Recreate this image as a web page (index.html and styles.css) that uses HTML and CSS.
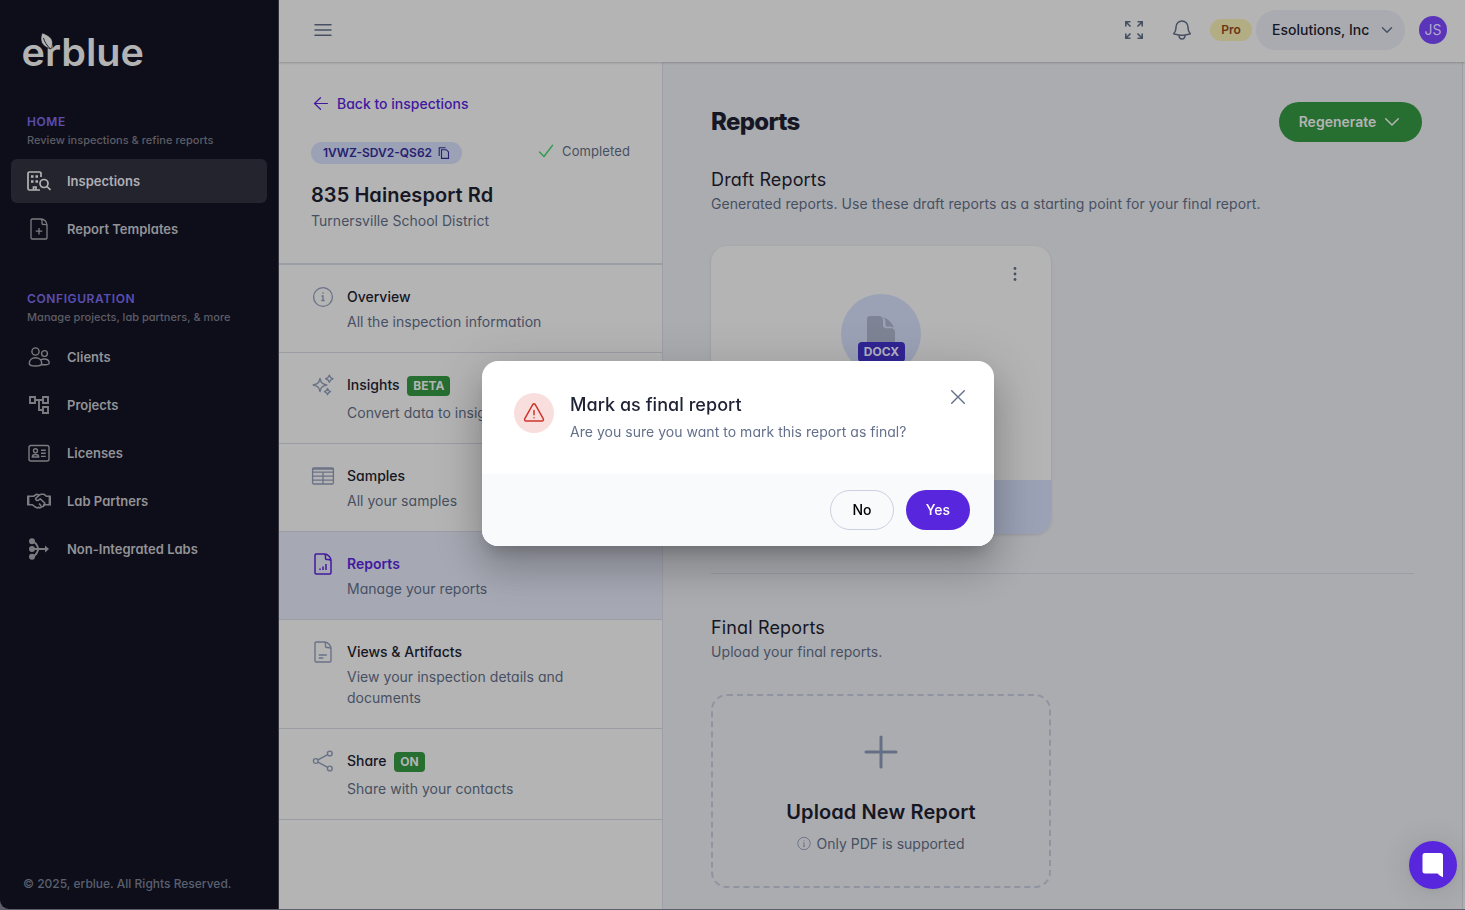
FILE: index.html
```
<!DOCTYPE html>
<html lang="en">
<head>
    <meta charset="UTF-8">
    <meta name="viewport" content="width=device-width, initial-scale=1.0">
    <title>erblue | Reports</title>
    <link rel="stylesheet" href="styles.css">
</head>
<body>
<div class="app">
    <!-- sidebar -->
    <nav class="sidebar">
        <svg class="logo" width="124" height="38" viewBox="0 0 124 38">
            <text x="-1.500" y="34.300" textLength="122.500" lengthAdjust="spacingAndGlyphs">erblue</text>
            <path class="leaf" d="M19.200 1c6 2 10.300 5 10.300 10 0 3-1 5-1.500 6C22 15.500 18 12 18 7c0-3 .6-4 1.200-6z"/>
            <path class="vein" d="M20.500 6c1 4 3 7 7 11"/>
        </svg>

        <div class="nav-group">
            <div class="nav-title">HOME</div>
            <div class="nav-sub">Review inspections &amp; refine reports</div>
            <a class="nav-item active">
                <svg width="24" height="24" viewBox="0 0 24 24" fill="none" stroke="currentColor" stroke-width="1.700">
                    <path d="M14 8V4.500A1.500 1.500 0 0 0 12.500 3H2.500A1.500 1.500 0 0 0 1 4.500v15A1.500 1.500 0 0 0 2.500 21h10.500M6.500 21v-3h2.500v3"/>
                    <path d="M4 7.500h2.500M8.500 7.500H11M4 12.500h2.500M8.500 12.500H11" stroke-width="2.500"/>
                    <circle cx="17" cy="14.500" r="4"/><path d="m20 17.500 3.500 3.500"/>
                </svg>
                <span>Inspections</span>
            </a>
            <a class="nav-item">
                <svg width="24" height="24" viewBox="0 0 24 24" fill="none" stroke="currentColor" stroke-width="1.300" stroke-linejoin="round">
                    <path d="M14 2H5.200A1.200 1.200 0 0 0 4 3.200v17.600A1.200 1.200 0 0 0 5.200 22h13.600a1.200 1.200 0 0 0 1.200-1.200V8c0-3.500-3-6-6-6zM14 2c1.500 1 1 2 1 4.500 0 .8.500 1 1.200 1C18 7.500 19 7 20 8.500M12 11v6.500M8.700 14.200h6.600"/>
                </svg>
                <span>Report Templates</span>
            </a>
        </div>

        <div class="nav-group">
            <div class="nav-title">CONFIGURATION</div>
            <div class="nav-sub">Manage projects, lab partners, &amp; more</div>
            <a class="nav-item">
                <svg width="24" height="24" viewBox="0 0 24 24" fill="none" stroke="currentColor" stroke-width="1.400" stroke-linejoin="round">
                    <circle cx="8.500" cy="6.500" r="3.600"/><circle cx="17.500" cy="8.500" r="2.900"/>
                    <path d="M2.300 18.500c0-3.700 2.700-5.800 6.200-5.800s6.200 2.100 6.200 5.800c0 1.600-2.700 2.500-6.200 2.500s-6.200-.9-6.200-2.500zM13.500 14.800c1-.5 2.200-.8 3.700-.8 3 0 5 1.700 5 4.200 0 1.300-3.500 2-7.500 1.300"/>
                </svg>
                <span>Clients</span>
            </a>
            <a class="nav-item">
                <svg width="24" height="24" viewBox="0 0 24 24" fill="none" stroke="currentColor" stroke-width="1.900">
                    <path d="M3 4h5v6H3zM16 4h5v6h-5zM16 14h5v6h-5zM8 7h8M12 7v10h4"/>
                </svg>
                <span>Projects</span>
            </a>
            <a class="nav-item">
                <svg width="24" height="24" viewBox="0 0 24 24" fill="none" stroke="currentColor" stroke-width="1.400">
                    <rect x="2" y="4.500" width="20" height="15.500" rx="2"/>
                    <circle cx="8.500" cy="9.800" r="2"/><path d="M5.300 16c0-1.600 1.500-2.500 3.200-2.500s3.200.9 3.200 2.500zM14 9.200h4.800M14 12.300h4.800M14 15.400h4.800"/>
                </svg>
                <span>Licenses</span>
            </a>
            <a class="nav-item">
                <svg width="24" height="24" viewBox="0 0 24 24" fill="none" stroke="currentColor" stroke-width="1.600" stroke-linejoin="round">
                    <path d="M1.200 6.500v10M22.800 6.500v10" stroke-width="2.400"/>
                    <path d="M2 7.200h4.500l3.200-2 2.300.8 2.300-.8h2.500l2.500 2H22M2 15.700h3.200L8.800 18.300l1.700.7 1.200-.7 1.300.6 1.500-1.100 1.700-.3 1.800-1.800H22M12.500 6 8.700 9.300c-.5 2 1.600 2.700 3 1.700l1.500-1.200 4.600 4.200-1.600 3M12 14.500l2.200 2.500"/>
                </svg>
                <span>Lab Partners</span>
            </a>
            <a class="nav-item">
                <svg width="24" height="24" viewBox="0 0 24 24" fill="none" stroke="currentColor" stroke-width="1.800">
                    <path d="M5 4c4 1 5 4 6.500 8C10 16 9 19 5 20M5 12h15"/>
                    <g fill="currentColor" stroke="none"><circle cx="5" cy="4.200" r="3"/><circle cx="5" cy="12" r="3"/><circle cx="5" cy="19.800" r="3"/><path d="m18 8.500 4 3.500-4 3.500z"/></g>
                </svg>
                <span>Non-Integrated Labs</span>
            </a>
        </div>
        <div class="copyright">© 2025, erblue. All Rights Reserved.</div>
    </nav>

    <div class="main">
        <header class="topbar">
            <svg class="menu" width="24" height="24" viewBox="0 0 24 24" fill="none" stroke="currentColor" stroke-width="1.500" stroke-linecap="round"><path d="M4 6.800h16M4 12h16M4 17.300h16"/></svg>
            <svg class="expand" width="24" height="24" viewBox="0 0 24 24" fill="none" stroke="currentColor" stroke-width="1.600">
                <path d="m3.500 3.500 5 5M3.800 8.500V3.800h4.700M20.500 3.500l-5 5M15.500 3.800h4.700v4.700M3.500 20.500l5-5M3.800 15.500v4.700h4.700M20.500 20.500l-5-5M20.200 15.500v4.700h-4.700"/>
            </svg>
            <svg class="bell" width="24" height="24" viewBox="0 0 24 24" fill="none" stroke="currentColor" stroke-width="1.500" stroke-linecap="round" stroke-linejoin="round">
                <path d="M14.857 17.082a23.848 23.848 0 0 0 5.454-1.310A8.967 8.967 0 0 1 18 9.750V9A6 6 0 0 0 6 9v.75a8.967 8.967 0 0 1-2.312 6.022c1.733.64 3.560 1.085 5.455 1.310m5.714 0a24.255 24.255 0 0 1-5.714 0m5.714 0a3 3 0 1 1-5.714 0"/>
            </svg>
            <span class="plan">Pro</span>
            <button class="org">Esolutions, Inc
                <svg width="12" height="8" viewBox="0 0 12 8" fill="none" stroke="currentColor" stroke-width="1.500" stroke-linecap="round"><path d="m1.500 1.800 4.500 4.500 4.500-4.500"/></svg>
            </button>
            <span class="avatar">JS</span>
        </header>

        <div class="body">
            <aside class="panel">
                <div class="panel-head">
                    <a class="back">
                        <svg width="16" height="14" viewBox="0 0 16 14" fill="none" stroke="currentColor" stroke-width="1.200" stroke-linecap="round" stroke-linejoin="round"><path d="M14.500 7.500H1.500M7.500 1.700l-6 5.800 6 5.800"/></svg>
                        Back to inspections
                    </a>
                    <div class="status-row">
                        <span class="code">1VWZ-SDV2-QS62
                            <svg width="12" height="12" viewBox="0 0 12 12" fill="none" stroke="currentColor" stroke-width="1.100"><path d="M3.500 2.700h4.800l2.200 2.200v6.500h-7zM1.200 9V.7h6.300"/></svg>
                        </span>
                        <span class="completed">
                            <svg width="16" height="14" viewBox="0 0 16 14" fill="none" stroke="currentColor" stroke-width="1.400" stroke-linecap="round" stroke-linejoin="round"><path d="m1.500 8 4.500 4.500L14.500 1.300"/></svg>
                            Completed
                        </span>
                    </div>
                    <h2>835 Hainesport Rd</h2>
                    <p>Turnersville School District</p>
                </div>

                <a class="step">
                    <svg width="24" height="24" viewBox="0 0 24 24" fill="none" stroke="currentColor" stroke-width="1.300"><circle cx="12" cy="12" r="9.400"/><path d="M10.500 11H12v4.500M10.300 15.500h3.400M11.400 8h1.200"/></svg>
                    <div><div class="step-title">Overview</div><div class="step-text">All the inspection information</div></div>
                </a>
                <a class="step">
                    <svg width="24" height="24" viewBox="0 0 24 24" fill="none" stroke="currentColor" stroke-width="1.400" stroke-linejoin="round">
                        <path d="M9 5.500c.9 4.300 2.300 5.600 6.800 6.500-4.500.9-5.900 2.200-6.800 6.500-.9-4.300-2.300-5.600-6.800-6.500 4.500-.9 5.900-2.200 6.800-6.500zM18.300 2.200c.6 2.400 1.200 3 3.600 3.600-2.400.6-3 1.200-3.600 3.600-.6-2.400-1.200-3-3.600-3.600 2.400-.6 3-1.200 3.600-3.600zM16.500 15.500c.5 2.200 1 2.600 3.100 3.100-2.100.5-2.600.9-3.100 3.100-.5-2.200-1-2.600-3.100-3.100 2.100-.5 2.600-.9 3.100-3.100z"/>
                    </svg>
                    <div><div class="step-title">Insights <span class="tag">BETA</span></div><div class="step-text">Convert data to insights</div></div>
                </a>
                <a class="step">
                    <svg width="24" height="24" viewBox="0 0 24 24" fill="none" stroke="currentColor" stroke-width="1.300"><rect x="1.600" y="4" width="20.800" height="16" rx="1.200"/><path d="M1.600 8.200h20.800M1.600 12.200h20.800M1.600 16.200h20.800M12 8.200V20M1.600 5h20.800"/></svg>
                    <div><div class="step-title">Samples</div><div class="step-text">All your samples</div></div>
                </a>
                <a class="step current">
                    <svg width="24" height="24" viewBox="0 0 24 24" fill="none" stroke="currentColor" stroke-width="1.500" stroke-linejoin="round">
                        <path d="M13.500 2H5.200A1.200 1.200 0 0 0 4 3.200v17.600A1.200 1.200 0 0 0 5.200 22h13.600a1.200 1.200 0 0 0 1.200-1.200V8.500c0-3.500-3.500-6.500-6.500-6.500zM13.500 2c1.500 1 1 2.500 1 4.500 0 .7.300 1 1 1 2-.2 3.500-.2 4.500 1M9 18v-1.500M12 18v-3.500M15 18v-6"/>
                    </svg>
                    <div><div class="step-title">Reports</div><div class="step-text">Manage your reports</div></div>
                </a>
                <a class="step">
                    <svg width="24" height="24" viewBox="0 0 24 24" fill="none" stroke="currentColor" stroke-width="1.400" stroke-linejoin="round" stroke-linecap="round">
                        <path d="M13.500 2H5.200A1.200 1.200 0 0 0 4 3.200v17.600A1.200 1.200 0 0 0 5.200 22h13.600a1.200 1.200 0 0 0 1.200-1.200V8.500c0-3.500-3.500-6.500-6.500-6.500zM13.500 2c1.500 1 1 2.500 1 4.500 0 .7.300 1 1 1 2-.2 3.500-.2 4.500 1M8.300 15h7M8.300 18h3.500"/>
                    </svg>
                    <div><div class="step-title">Views &amp; Artifacts</div><div class="step-text">View your inspection details and documents</div></div>
                </a>
                <a class="step">
                    <svg width="24" height="24" viewBox="0 0 24 24" fill="none" stroke="currentColor" stroke-width="1.400"><circle cx="4.800" cy="12" r="2.400"/><circle cx="18.800" cy="4.500" r="2.400"/><circle cx="18.800" cy="19.500" r="2.400"/><path d="m7 10.900 9.700-5.300M7 13.100l9.700 5.300"/></svg>
                    <div><div class="step-title">Share <span class="tag">ON</span></div><div class="step-text">Share with your contacts</div></div>
                </a>
            </aside>

            <section class="content">
                <div class="content-head">
                    <h1>Reports</h1>
                    <button class="regenerate">Regenerate
                        <svg width="16" height="10" viewBox="0 0 16 10" fill="none" stroke="currentColor" stroke-width="1.500" stroke-linecap="round"><path d="m1.700 1.800 6.300 6.200 6.300-6.200"/></svg>
                    </button>
                </div>
                <h3>Draft Reports</h3>
                <p class="hint">Generated reports. Use these draft reports as a starting point for your final report.</p>

                <div class="report-card">
                    <svg class="dots" width="4" height="16" viewBox="0 0 4 16" fill="currentColor"><circle cx="2" cy="2.500" r="1.400"/><circle cx="2" cy="8" r="1.400"/><circle cx="2" cy="13.500" r="1.400"/></svg>
                    <div class="file">
                        <svg width="28" height="34" viewBox="0 0 28 34" fill="currentColor"><path d="M0 3a3 3 0 0 1 3-3h9c2.500 0 4 1.500 4 4v5c0 2 1.200 3.200 3.200 3.200H24c2.500 0 4 1.800 4 4V34H0z"/><path d="M15.500 1C21 2.500 25.500 7 27 12c-1.500-1-3-1.500-5-1.500h-2c-1 0-1.500-.5-1.500-1.500V6c0-2-1-3.800-3-5z"/></svg>
                        <span class="ext">DOCX</span>
                    </div>
                    <div class="card-foot"></div>
                </div>

                <hr>

                <h3>Final Reports</h3>
                <p class="hint">Upload your final reports.</p>

                <div class="upload">
                    <svg class="plus" width="34" height="34" viewBox="0 0 34 34" stroke="currentColor" stroke-width="3" stroke-linecap="round"><path d="M17 2v30M2 17h30"/></svg>
                    <h2>Upload New Report</h2>
                    <div class="upload-note">
                        <svg width="14" height="14" viewBox="0 0 14 14" fill="none" stroke="currentColor" stroke-width=".9"><circle cx="7" cy="7.500" r="6.200"/><path d="M6.200 6.800H7v3.500M6 10.300h2M6.600 4.800h.9"/></svg>
                        Only PDF is supported
                    </div>
                </div>
            </section>
        </div>
    </div>
</div>

<button class="chat">
    <svg width="22" height="25" viewBox="0 0 22 25" fill="#fff"><path d="M3 0h15.500a2.500 2.500 0 0 1 2.500 2.500V24.300c-2-.8-4-2-5.300-3.800H3A2.500 2.500 0 0 1 .5 18V2.500A2.500 2.500 0 0 1 3 0z"/></svg>
</button>

<!-- confirm dialog -->
<div class="dialog">
    <div class="dialog-body">
        <span class="warn">
            <svg width="22" height="22" viewBox="0 0 22 22" fill="none" stroke="currentColor" stroke-width="1.500" stroke-linecap="round" stroke-linejoin="round"><path d="M9.700 2.700 1.800 16.700c-.6 1.200 0 2.300 1.300 2.300h15.800c1.300 0 1.900-1.100 1.300-2.300L12.300 2.700c-.7-1.200-1.900-1.200-2.600 0z"/><path d="M11 8.500v4.300M11 15.700v.1"/></svg>
        </span>
        <div class="dialog-text">
            <div class="dialog-title">Mark as final report</div>
            <div class="dialog-msg">Are you sure you want to mark this report as final?</div>
        </div>
        <svg class="close" width="16" height="16" viewBox="0 0 16 16" stroke="currentColor" stroke-width="1.400" stroke-linecap="round"><path d="m1.700 1.700 12.600 12.600M14.300 1.700 1.700 14.300"/></svg>
    </div>
    <div class="dialog-foot">
        <button class="btn">No</button>
        <button class="btn primary">Yes</button>
    </div>
</div>
</body>
</html>
```
FILE: styles.css
```
* {
    box-sizing: border-box;
}
body {
    margin: 0;
    height: 910px;
    overflow: hidden;
    background: #5d5e69;
    font-family: Inter, "Liberation Sans", sans-serif;
    font-feature-settings: "cv11";
    font-size: 14px;
    color: #161724;
}
h1, h2, h3, p {
    margin: 0;
}
svg {
    display: block;
    flex: none;
}
button {
    font-family: inherit;
    font-feature-settings: inherit;
    border: none;
    padding: 0;
}
.app {
    display: flex;
    height: 909px;
    border-radius: 0 0 0 9px;
    overflow: hidden;
}

/* sidebar */
.sidebar {
    display: flex;
    flex-direction: column;
    width: 279px;
    padding: 32px 11px 16px 11px;
    background: #0e0e1a;
    border-right: 1px solid #36363f;
    color: #7b7b80;
}
.logo {
    margin: 0 0 4px 12px;
    overflow: visible;
}
.logo text {
    font-size: 38.5px;
    font-weight: 570;
    fill: #b3b3b3;
}
.leaf {
    fill: #b3b3b3;
    stroke: #0e0e1a;
    stroke-width: .6;
}
.vein {
    fill: none;
    stroke: #0e0e1a;
    stroke-width: .9;
}
.nav-group {
    margin-top: 39px;
}
.nav-title {
    padding-left: 16px;
    font-size: 12px;
    line-height: 18px;
    font-weight: 600;
    letter-spacing: .6px;
    color: #5a4fb0;
}
.nav-sub {
    padding-left: 16px;
    margin-bottom: 10px;
    font-size: 11px;
    line-height: 18px;
    font-weight: 550;
    letter-spacing: .02px;
    color: #5d5d64;
}
.nav-item {
    display: flex;
    align-items: center;
    gap: 16px;
    height: 44px;
    padding: 0 16px;
    margin-bottom: 4px;
    border-radius: 6px;
    font-size: 13px;
    font-weight: 570;
}
.nav-item span {
    color: #939397;
}
.nav-item.active {
    margin-right: -1px;
    width: 256px;
    background: #24242f;
    color: #b3b3b3;
}
.nav-item.active span {
    color: #b0b0b3;
}
.nav-group + .nav-group {
    margin-top: 35px;
}
.nav-group + .nav-group .nav-sub {
    margin-bottom: 9px;
}
.copyright {
    margin: auto 0 0 12px;
    font-size: 12px;
    line-height: 18px;
    font-weight: 500;
    color: #5a6070;
}

/* top bar */
.main {
    flex: 1;
    display: flex;
    flex-direction: column;
}
.topbar {
    position: relative;
    display: flex;
    align-items: center;
    height: 62px;
    padding: 0 18px 2px 32px;
    background: #b4b4b4;
    box-shadow: 0 1px 2px rgba(0, 0, 0, .2);
    color: #475063;
}
.expand {
    margin-left: auto;
}
.bell {
    margin: 0 16px 0 24px;
}
.plan {
    width: 42px;
    margin-right: 4px;
    border-radius: 11px;
    background: #b3ad83;
    color: #6b3515;
    font-size: 12px;
    line-height: 22px;
    font-weight: 600;
    text-align: center;
}
.org {
    display: flex;
    align-items: center;
    justify-content: space-between;
    width: 149px;
    height: 40px;
    padding: 0 12px 1px 16px;
    margin-right: 14px;
    border-radius: 20px;
    background: #a9abb1;
    color: #161724;
    font-size: 14px;
    font-weight: 500;
}
.org svg {
    color: #475063;
}
.avatar {
    width: 28px;
    height: 28px;
    border-radius: 50%;
    background: #5a34b9;
    color: #b0a8cf;
    line-height: 28px;
    text-align: center;
}
.body {
    flex: 1;
    display: flex;
    padding-right: 2px;
    background: #b0b0b1;
}

/* inspection panel */
.panel {
    width: 384px;
    background: #b4b4b4;
    border-right: 1px solid #9da0aa;
}
.panel-head {
    height: 203px;
    padding: 31px 32px 0;
    border-bottom: 2px solid #9a9fa7;
}
.back {
    display: flex;
    align-items: center;
    gap: 8px;
    height: 20px;
    padding-left: 2px;
    font-weight: 500;
    color: #4119a0;
}
.status-row {
    display: flex;
    justify-content: space-between;
    margin-top: 29px;
}
.code {
    display: flex;
    align-items: center;
    justify-content: space-between;
    width: 151px;
    height: 22px;
    padding: 0 12px 1px;
    border-radius: 11px;
    background: #9ba2b6;
    color: #272070;
    font-size: 12px;
    font-weight: 600;
}
.completed {
    display: flex;
    align-items: center;
    gap: 8px;
    height: 18px;
    font-size: 13px;
    letter-spacing: .1px;
    color: #475063;
}
.completed svg {
    color: #2c9a4a;
}
.panel-head h2 {
    margin-top: 17px;
    font-size: 20px;
    line-height: 28px;
    font-weight: 600;
    letter-spacing: .06px;
}
.panel-head p {
    line-height: 24px;
    letter-spacing: .03px;
    color: #475063;
}
.step {
    display: flex;
    gap: 12px;
    padding: 20px 32px;
    border-bottom: 1px solid #9b9da5;
    color: #697286;
}
.step-title {
    min-height: 24px;
    margin-bottom: 2px;
    line-height: 24px;
    font-weight: 520;
    color: #161724;
}
.step-title:has(.tag) {
    height: 27px;
}
.step-text {
    line-height: 21px;
    letter-spacing: .03px;
    color: #475063;
}
.tag {
    display: inline-block;
    margin-left: 4px;
    padding: 0 6px;
    border-radius: 4px;
    background: #276e31;
    color: #b4b4b4;
    font-size: 12px;
    line-height: 20px;
    font-weight: 700;
}
.current {
    background: #a6a8b3;
    color: #4119a0;
}
.current .step-title {
    color: #4119a0;
    font-weight: 600;
}

/* reports */
.content {
    flex: 1;
    padding: 40px 40px 0 48px;
    background: #abacb0;
    border-right: 1px solid #9c9da2;
}
.content-head {
    display: flex;
    align-items: center;
    justify-content: space-between;
    height: 40px;
    margin-bottom: 24px;
}
.content h1 {
    font-size: 24px;
    line-height: 32px;
    font-weight: 800;
    letter-spacing: -.7px;
}
.regenerate {
    display: flex;
    align-items: center;
    justify-content: center;
    gap: 8px;
    width: 143px;
    height: 40px;
    padding: 0 2px 1px 0;
    border-radius: 20px;
    background: #276e31;
    color: #b4b4b4;
    font-size: 14px;
    font-weight: 600;
    font-feature-settings: normal;
}
.content h3 {
    font-size: 18px;
    line-height: 28px;
    font-weight: 400;
    letter-spacing: .15px;
}
.hint {
    line-height: 20px;
    letter-spacing: .07px;
    color: #475063;
}
.report-card {
    position: relative;
    width: 340px;
    height: 288px;
    margin-top: 32px;
    border-radius: 16px;
    overflow: hidden;
    background: #b4b4b4;
    box-shadow: 0 1px 3px rgba(0, 0, 0, .12);
}
.dots {
    position: absolute;
    top: 20px;
    right: 34px;
    color: #475063;
}
.file {
    position: relative;
    width: 80px;
    height: 80px;
    margin: 48px auto 0;
    padding: 22px 26px;
    border-radius: 50%;
    background: #9ba2b6;
    color: #7e8495;
}
.ext {
    position: absolute;
    left: 17px;
    top: 48px;
    width: 47px;
    border-radius: 4px;
    background: #312495;
    color: #b4b4c0;
    font-size: 12px;
    line-height: 20px;
    font-weight: 650;
    text-align: center;
}
.card-foot {
    height: 54px;
    margin-top: 106px;
    background: #9ba2b6;
}
.content hr {
    height: 1px;
    margin: 39px 8px 40px 0;
    border: none;
    background: #9b9ea5;
}
.upload {
    display: flex;
    flex-direction: column;
    align-items: center;
    width: 340px;
    height: 194px;
    margin-top: 32px;
    padding-top: 39px;
    border: 2px dashed #9094a0;
    border-radius: 16px;
}
.plus {
    color: #667084;
}
.upload h2 {
    margin-top: 28px;
    font-size: 20px;
    line-height: 30px;
    font-weight: 600;
    letter-spacing: .1px;
}
.upload-note {
    display: flex;
    align-items: center;
    gap: 5px;
    height: 20px;
    margin-top: 6px;
    color: #475063;
}
.upload-note svg {
    color: #667084;
}

.chat {
    position: fixed;
    right: 8px;
    bottom: 21px;
    display: flex;
    align-items: center;
    justify-content: center;
    width: 48px;
    height: 48px;
    border-radius: 50%;
    background: #5826dc;
    box-shadow: 0 1px 6px rgba(0, 0, 0, .06), 0 2px 32px rgba(0, 0, 0, .12);
}

/* dialog */
.dialog {
    position: fixed;
    left: 482px;
    top: 361px;
    width: 512px;
    height: 185px;
    border-radius: 16px;
    overflow: hidden;
    background: #fff;
    box-shadow: 0 11px 15px -7px rgba(0, 0, 0, .2), 0 24px 38px 3px rgba(0, 0, 0, .14), 0 9px 46px 8px rgba(0, 0, 0, .12);
}
.dialog-body {
    display: flex;
    height: 113px;
    padding: 28px 28px 0 32px;
}
.warn {
    display: flex;
    align-items: center;
    justify-content: center;
    width: 40px;
    height: 40px;
    margin: 4px 16px 0 0;
    border-radius: 50%;
    background: #f9dede;
    color: #d0342c;
}
.dialog-title {
    margin-top: 4px;
    font-size: 18px;
    line-height: 24px;
    font-weight: 500;
    letter-spacing: .05px;
    color: #1e2235;
}
.dialog-msg {
    margin-top: 4px;
    line-height: 22px;
    letter-spacing: .03px;
    color: #64708b;
}
.close {
    margin-left: auto;
    color: #64708b;
}
.dialog-foot {
    display: flex;
    align-items: center;
    justify-content: flex-end;
    gap: 12px;
    height: 72px;
    padding-right: 24px;
    background: #f8fafc;
}
.btn {
    width: 64px;
    height: 40px;
    padding-bottom: 2px;
    border: 1px solid #cbd0e0;
    border-radius: 20px;
    background: none;
    font-size: 14px;
    font-weight: 500;
    color: #000;
}
.primary {
    border: none;
    background: #5826dc;
    color: #fff;
    font-weight: 550;
}
```
